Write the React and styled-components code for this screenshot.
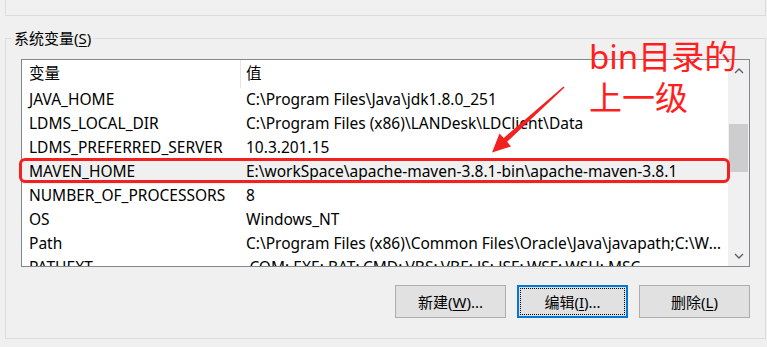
import styled, { createGlobalStyle } from 'styled-components';

const GlobalStyle = createGlobalStyle`
  html, body {
    margin: 0;
    background: #f0f0f0;
  }
  body {
    font-family: "Noto Sans", "Noto Sans CJK SC", sans-serif;
    font-size: 15.5px;
    color: #000;
  }
`;

const Page = styled.div`
  position: relative;
  width: 767px;
  height: 347px;
  overflow: hidden;
`;

const UpperGroup = styled.div`
  height: 16px;
  margin: 0 1px 0 5px;
  border: 1px solid #dcdcdc;
  border-top: none;
  box-sizing: border-box;
`;

const GroupBox = styled.fieldset`
  margin: 13px 1px 0 5px;
  padding: 12px 15px 20px 15px;
  border: 1px solid #dcdcdc;
  min-width: 0;
`;

const GroupTitle = styled.legend`
  margin-left: -9px;
  padding: 0 2px;
  line-height: 18px;
  font-size: 15px;
`;

const Key = styled.span`
  text-decoration: underline;
  text-underline-offset: 2px;
`;

const ListView = styled.div`
  display: flex;
  height: 208px;
  box-sizing: border-box;
  border: 1px solid #828790;
  background: #fff;
`;

const ListBody = styled.div`
  flex: 1;
  min-width: 0;
  overflow: hidden;
`;

const HeaderRow = styled.div`
  display: grid;
  grid-template-columns: 218px 1fr;
  height: 28px;
  line-height: 27px;
`;

const HeaderCell = styled.div`
  padding-left: ${(p) => (p.$divider ? '5px' : '7px')};
  border-left: ${(p) => (p.$divider ? '1px solid #e5e5e5' : 'none')};
`;

const Row = styled.div`
  display: grid;
  grid-template-columns: 218px 1fr;
  height: 24px;
  line-height: 23px;
  background: ${(p) => (p.$selected ? '#f0f0f0' : 'transparent')};
`;

const Cell = styled.div`
  padding-left: ${(p) => (p.$value ? '6px' : '7px')};
  padding-right: ${(p) => (p.$value ? '4px' : '0')};
  white-space: nowrap;
  overflow: hidden;
  text-overflow: ellipsis;
`;

const ScrollBar = styled.div`
  width: 21px;
  display: flex;
  flex-direction: column;
  background: #f0f0f0;
`;

const ScrollArrow = styled.div`
  height: 21px;
  display: flex;
  align-items: center;
  justify-content: center;
`;

const ScrollTrack = styled.div`
  flex: 1;
`;

const ScrollThumb = styled.div`
  margin: 43px 1px 0;
  height: 48px;
  background: #cdcdcd;
`;

const ButtonRow = styled.div`
  display: flex;
  justify-content: flex-end;
  gap: 11px;
  margin-top: 18px;
`;

const Button = styled.button`
  position: relative;
  width: 111px;
  height: 33px;
  box-sizing: border-box;
  background: #e1e1e1;
  border: ${(p) => (p.$focused ? '2px solid #0078d7' : '1px solid #adadad')};
  font-family: inherit;
  font-size: 15px;
  color: #000;
  padding: 0;

  &::after {
    content: '';
    display: ${(p) => (p.$focused ? 'block' : 'none')};
    position: absolute;
    inset: 1px;
    border: 1px dotted #000;
  }
`;

const Highlight = styled.div`
  position: absolute;
  left: 19px;
  top: 158px;
  width: 711px;
  height: 25px;
  box-sizing: border-box;
  border: 3px solid #f2201f;
  border-radius: 6px;
  pointer-events: none;
`;

const Note = styled.div`
  position: absolute;
  left: 589px;
  top: 36px;
  font-family: "Noto Sans", "Noto Sans CJK SC", sans-serif;
  font-size: 33px;
  line-height: 41px;
  color: #ff1f1f;
  pointer-events: none;
`;

const Arrow = styled.svg`
  position: absolute;
  left: 0;
  top: 0;
  pointer-events: none;
`;

const rows = [
  ['JAVA_HOME', 'C:\\Program Files\\Java\\jdk1.8.0_251'],
  ['LDMS_LOCAL_DIR', 'C:\\Program Files (x86)\\LANDesk\\LDClient\\Data'],
  ['LDMS_PREFERRED_SERVER', '10.3.201.15'],
  ['MAVEN_HOME', 'E:\\workSpace\\apache-maven-3.8.1-bin\\apache-maven-3.8.1'],
  ['NUMBER_OF_PROCESSORS', '8'],
  ['OS', 'Windows_NT'],
  ['Path', 'C:\\Program Files (x86)\\Common Files\\Oracle\\Java\\javapath;C:\\WINDOWS\\system32;C:\\WINDOWS'],
  ['PATHEXT', '.COM;.EXE;.BAT;.CMD;.VBS;.VBE;.JS;.JSE;.WSF;.WSH;.MSC'],
];

function Chevron({ down }) {
  return (
    <svg width="10" height="6" viewBox="0 0 10 6">
      <path
        d={down ? 'M1 1 L5 5 L9 1' : 'M1 5 L5 1 L9 5'}
        fill="none"
        stroke="#606060"
        strokeWidth="1.4"
      />
    </svg>
  );
}

export default function App() {
  return (
    <>
      <GlobalStyle />
      <Page>
        <UpperGroup />
        <GroupBox>
          <GroupTitle>
            系统变量(<Key>S</Key>)
          </GroupTitle>
          <ListView>
            <ListBody>
              <HeaderRow>
                <HeaderCell>变量</HeaderCell>
                <HeaderCell $divider>值</HeaderCell>
              </HeaderRow>
              {rows.map(([name, value]) => (
                <Row key={name} $selected={name === 'MAVEN_HOME'}>
                  <Cell>{name}</Cell>
                  <Cell $value>{value}</Cell>
                </Row>
              ))}
            </ListBody>
            <ScrollBar>
              <ScrollArrow>
                <Chevron />
              </ScrollArrow>
              <ScrollTrack>
                <ScrollThumb />
              </ScrollTrack>
              <ScrollArrow>
                <Chevron down />
              </ScrollArrow>
            </ScrollBar>
          </ListView>
          <ButtonRow>
            <Button>
              新建(<Key>W</Key>)...
            </Button>
            <Button $focused>
              编辑(<Key>I</Key>)...
            </Button>
            <Button>
              删除(<Key>L</Key>)
            </Button>
          </ButtonRow>
        </GroupBox>
        <Highlight />
        <Note>
          bin目录的
          <br />
          上一级
        </Note>
        <Arrow width="767" height="347" viewBox="0 0 767 347">
          <polygon
            points="564.5,87.5 507.1,141.8 511,146.5 492,152.5 499.5,133.5 503.7,138 563.5,86.5"
            fill="#f2201f"
          />
        </Arrow>
      </Page>
    </>
  );
}
